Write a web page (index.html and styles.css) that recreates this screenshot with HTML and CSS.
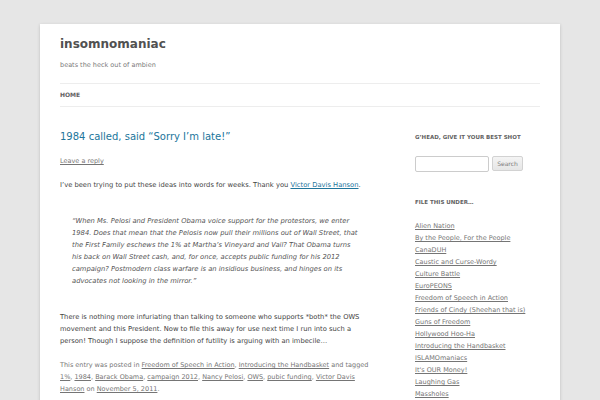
FILE: index.html
```html
<!DOCTYPE html>
<html>
<head>
<meta charset="utf-8">
<link rel="stylesheet" href="styles.css">
</head>
<body>
<div class="site">
  <header class="site-header">
    <h1 class="site-title">insomnomaniac</h1>
    <h2 class="site-description">beats the heck out of ambien</h2>
    <nav class="main-nav"><a class="current" href="#">Home</a></nav>
  </header>
  <div class="main">
    <article class="content">
      <header class="entry-header">
        <h1 class="entry-title"><a href="#">1984 called, said “Sorry I’m late!”</a></h1>
        <div class="comments-link"><a href="#">Leave a reply</a></div>
      </header>
      <div class="entry-content">
        <p>I’ve been trying to put these ideas into words for weeks. Thank you <a class="blue" href="#">Victor Davis Hanson</a>.</p>
        <blockquote>“When Ms. Pelosi and President Obama voice support for the protestors, we enter 1984. Does that mean that the Pelosis now pull their millions out of Wall Street, that the First Family eschews the 1% at Martha’s Vineyard and Vail? That Obama turns his back on Wall Street cash, and, for once, accepts public funding for his 2012 campaign? Postmodern class warfare is an insidious business, and hinges on its advocates not looking in the mirror.”</blockquote>
        <p>There is nothing more infuriating than talking to someone who supports *both* the OWS movement and this President. Now to file this away for use next time I run into such a person! Though I suppose the definition of futility is arguing with an imbecile…</p>
      </div>
      <footer class="entry-meta">This entry was posted in <a href="#">Freedom of Speech in Action</a>, <a href="#">Introducing the Handbasket</a> and tagged <a href="#">1%</a>, <a href="#">1984</a>, <a href="#">Barack Obama</a>, <a href="#">campaign 2012</a>, <a href="#">Nancy Pelosi</a>, <a href="#">OWS</a>, <a href="#">pubic funding</a>, <a href="#">Victor Davis Hanson</a> on <a href="#">November 5, 2011</a>.</footer>
    </article>
    <aside class="sidebar">
      <section class="widget">
        <h3 class="widget-title">G’head, give it your best shot</h3>
        <form class="search-form">
          <input class="search-input" type="text">
          <button class="search-btn" type="button">Search</button>
        </form>
      </section>
      <section class="widget">
        <h3 class="widget-title">File this under…</h3>
        <ul class="cat-list">
          <li><a href="#">Alien Nation</a></li>
          <li><a href="#">By the People, For the People</a></li>
          <li><a href="#">CanaDUH</a></li>
          <li><a href="#">Caustic and Curse-Wordy</a></li>
          <li><a href="#">Culture Battle</a></li>
          <li><a href="#">EuroPEONS</a></li>
          <li><a href="#">Freedom of Speech in Action</a></li>
          <li><a href="#">Friends of Cindy (Sheehan that is)</a></li>
          <li><a href="#">Guns of Freedom</a></li>
          <li><a href="#">Hollywood Hoo-Ha</a></li>
          <li><a href="#">Introducing the Handbasket</a></li>
          <li><a href="#">ISLAMOmaniacs</a></li>
          <li><a href="#">It's OUR Money!</a></li>
          <li><a href="#">Laughing Gas</a></li>
          <li><a href="#">Massholes</a></li>
        </ul>
      </section>
    </aside>
  </div>
</div>
</body>
</html>
```
FILE: styles.css
```css
html, body {
  margin: 0;
  padding: 0;
}
body {
  background: #e6e6e6;
  font-family: "DejaVu Sans", sans-serif;
  color: #444;
  font-size: 6.75px;
  line-height: 12px;
}
.site {
  margin: 24px 40px 0;
  padding: 0 20px;
  background: #fff;
  min-height: 400px;
  box-shadow: 0 1px 3px rgba(100, 100, 100, 0.3);
}
.site-header {
  padding: 12px 0;
}
.site-title {
  margin: 0 0 7px;
  font-size: 12px;
  line-height: 16px;
  font-weight: bold;
  color: #515151;
}
.site-description {
  margin: 0;
  font-size: 6.5px;
  line-height: 12px;
  font-weight: normal;
  color: #7a7a7a;
}
.main-nav {
  margin-top: 12px;
  border-top: 1px solid #ededed;
  border-bottom: 1px solid #ededed;
  line-height: 22px;
  font-size: 6px;
}
.main-nav a {
  color: #636363;
  text-decoration: none;
  text-transform: uppercase;
  font-weight: bold;
}
.main {
  margin-top: 12px;
  display: flex;
  justify-content: space-between;
  align-items: flex-start;
}
.content {
  width: 312px;
}
.sidebar {
  width: 125px;
}
.entry-header {
  margin-bottom: 12px;
}
.entry-title {
  margin: 0;
  font-size: 10px;
  line-height: 12px;
  font-weight: normal;
}
.entry-title a {
  color: #21759b;
  text-decoration: none;
}
.comments-link {
  margin-top: 12px;
  font-size: 6.5px;
  line-height: 12px;
}
.comments-link a,
.entry-meta a {
  color: #757575;
}
.entry-content p {
  margin: 0 0 12px;
}
.blue {
  color: #21759b;
}
blockquote {
  margin: 0 0 12px;
  padding: 12px;
  font-style: italic;
  color: #555;
}
.entry-meta {
  margin-top: 12px;
  font-size: 6.5px;
  line-height: 12px;
  color: #757575;
}
.widget {
  margin-bottom: 24px;
}
.widget-title {
  margin: 0 0 12px;
  font-size: 5.5px;
  line-height: 12px;
  font-weight: bold;
  text-transform: uppercase;
  color: #636363;
}
.search-form {
  display: flex;
  align-items: center;
  gap: 3px;
  height: 17px;
}
.search-input {
  box-sizing: border-box;
  width: 74px;
  height: 16px;
  margin: 0;
  padding: 3px;
  border: 1px solid #ccc;
  border-radius: 2px;
  background: #fff;
  font-size: 7px;
}
.search-btn {
  box-sizing: border-box;
  width: 31px;
  height: 15px;
  margin: 0;
  padding: 0;
  border: 1px solid #d2d2d2;
  border-radius: 2px;
  background: linear-gradient(#f4f4f4, #e6e6e6);
  color: #7c7c7c;
  font-family: "DejaVu Sans", sans-serif;
  font-size: 6px;
}
.cat-list {
  list-style: none;
  margin: 0;
  padding: 0;
  font-size: 6.5px;
  line-height: 12px;
}
.cat-list a {
  color: #757575;
}
```
